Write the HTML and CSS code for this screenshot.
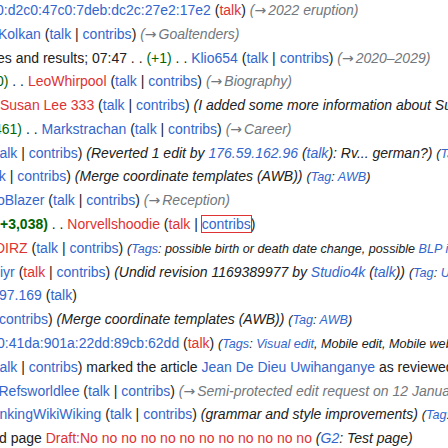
FILE: index.html
```html
<!DOCTYPE html>
<html>
<head>
<meta charset="utf-8">
<link rel="stylesheet" href="styles.css">
</head>
<body>
<ul class="changes">
  <li class="row o1"><span class="a">0:d2c0:47c0:7deb:dc2c:27e2:17e2</span> (<span class="new">talk</span>) <span class="sec">(<span class="arr">→</span>2022 eruption)</span></li>
  <li class="row o2"><span class="a">Kolkan</span> (<span class="a">talk</span> | <span class="a">contribs</span>) <span class="sec">(<span class="arr">→</span>Goaltenders)</span></li>
  <li class="row o3">es and results; 07:47 . . <span class="pos">(+1)</span> . . <span class="a">Klio654</span> (<span class="a">talk</span> | <span class="a">contribs</span>) <span class="sec">(<span class="arr">→</span>2020–2029)</span></li>
  <li class="row o4"><span class="pos">0)</span> . . <span class="new">LeoWhirpool</span> (<span class="a">talk</span> | <span class="a">contribs</span>) <span class="sec">(<span class="arr">→</span>Biography)</span></li>
  <li class="row o5"><span class="new">Susan Lee 333</span> (<span class="a">talk</span> | <span class="a">contribs</span>) <span class="cmt">(I added some more information about Susan Lee)</span></li>
  <li class="row o6"><span class="pos">461)</span> . . <span class="a">Markstrachan</span> (<span class="a">talk</span> | <span class="a">contribs</span>) <span class="sec">(<span class="arr">→</span>Career)</span></li>
  <li class="row o7"><span class="a">talk</span> | <span class="a">contribs</span>) <span class="cmt">(Reverted 1 edit by <span class="a">176.59.162.96</span> (<span class="a">talk</span>): Rv... german?)</span> <span class="tag">(<span class="a">Tag</span>: <span class="a">Rollback</span>)</span></li>
  <li class="row o8"><span class="a">talk</span> | <span class="a">contribs</span>) <span class="cmt">(Merge coordinate templates (AWB))</span> <span class="tag">(<span class="a">Tag</span>: <span class="a">AWB</span>)</span></li>
  <li class="row o9"><span class="a">oBlazer</span> (<span class="a">talk</span> | <span class="a">contribs</span>) <span class="sec">(<span class="arr">→</span>Reception)</span></li>
  <li class="row o10"><strong class="pos">+3,038)</strong> . . <span class="new">Norvellshoodie</span> (<span class="new">talk</span> | <span class="a focus">contribs</span>)</li>
  <li class="row o11"><span class="new">DIRZ</span> (<span class="a">talk</span> | <span class="a">contribs</span>) <span class="tag">(<span class="a">Tags</span>: possible birth or death date change, possible <span class="a">BLP issue or vandalism</span>)</span></li>
  <li class="row o12"><span class="a">iyr</span> (<span class="new">talk</span> | <span class="a">contribs</span>) <span class="cmt">(Undid revision 1169389977 by <span class="a">Studio4k</span> (<span class="a">talk</span>))</span> <span class="tag">(<span class="a">Tag</span>: <span class="a">Undo</span>)</span></li>
  <li class="row o13"><span class="a">97.169</span> (<span class="a">talk</span>)</li>
  <li class="row o14"><span class="a">contribs</span>) <span class="cmt">(Merge coordinate templates (AWB))</span> <span class="tag">(<span class="a">Tag</span>: <span class="a">AWB</span>)</span></li>
  <li class="row o15"><span class="a">0:41da:901a:22dd:89cb:62dd</span> (<span class="new">talk</span>) <span class="tag">(<span class="a">Tags</span>: <span class="a">Visual edit</span>, Mobile edit, Mobile web edit)</span></li>
  <li class="row o16"><span class="a">talk</span> | <span class="a">contribs</span>) marked the article <span class="a">Jean De Dieu Uwihanganye</span> as reviewed</li>
  <li class="row o17"><span class="a">Refsworldlee</span> (<span class="a">talk</span> | <span class="a">contribs</span>) <span class="sec">(<span class="arr">→</span>Semi-protected edit request on 12 January 2024)</span></li>
  <li class="row o18"><span class="a">ThinkingWikiWiking</span> (<span class="a">talk</span> | <span class="a">contribs</span>) <span class="cmt">(grammar and style improvements)</span> <span class="tag">(<span class="a">Tag</span>: <span class="a">Visual edit</span>)</span></li>
  <li class="row o19">d page <span class="new">Draft:No no no no no no no no no no no no</span> <span class="cmt">(<span class="a">G2</span>: Test page)</span></li>
</ul>
</body>
</html>
```
FILE: styles.css
```css
html, body {
  margin: 0;
  padding: 0;
  background: #ffffff;
  overflow: hidden;
}

body {
  width: 448px;
  height: 448px;
  font-family: "Liberation Sans", Arial, sans-serif;
  font-size: 14px;
  color: #202122;
}

.changes {
  list-style: none;
  margin: -1px 0 0 0;
  padding: 0;
}

.row {
  white-space: nowrap;
  height: 22.4px;
  line-height: 22.4px;
  margin-bottom: 1.4px;
}

.a { color: #3366cc; }
.new { color: #dd3333; }
.pos { color: #006400; }
strong.pos { font-weight: bold; }
.cmt { font-style: italic; }
.sec { font-style: italic; color: #72777d; }
.arr {
  font-family: "DejaVu Sans", sans-serif;
  font-style: normal;
  color: #72777d;
  letter-spacing: 2px;
  line-height: 1;
}
.tag { font-style: italic; font-size: 90%; line-height: 1; }
.focus { outline: 1px solid #dd3333; }

.o1 { margin-left: -4px; }
.o2 { margin-left: -2px; }
.o3 { margin-left: -3px; }
.o4 { margin-left: -4px; }
.o5 { margin-left: 0; }
.o6 { margin-left: -6px; }
.o7 { margin-left: -4.5px; }
.o8 { margin-left: -16px; }
.o9 { margin-left: -3px; }
.o10 { margin-left: 0; }
.o11 { margin-left: -5px; }
.o12 { margin-left: 0; }
.o13 { margin-left: -1px; }
.o14 { margin-left: -1px; }
.o15 { margin-left: -3px; }
.o16 { margin-left: -4.5px; }
.o17 { margin-left: -1.5px; }
.o18 { margin-left: -20px; }
.o19 { margin-left: -1px; }
```
